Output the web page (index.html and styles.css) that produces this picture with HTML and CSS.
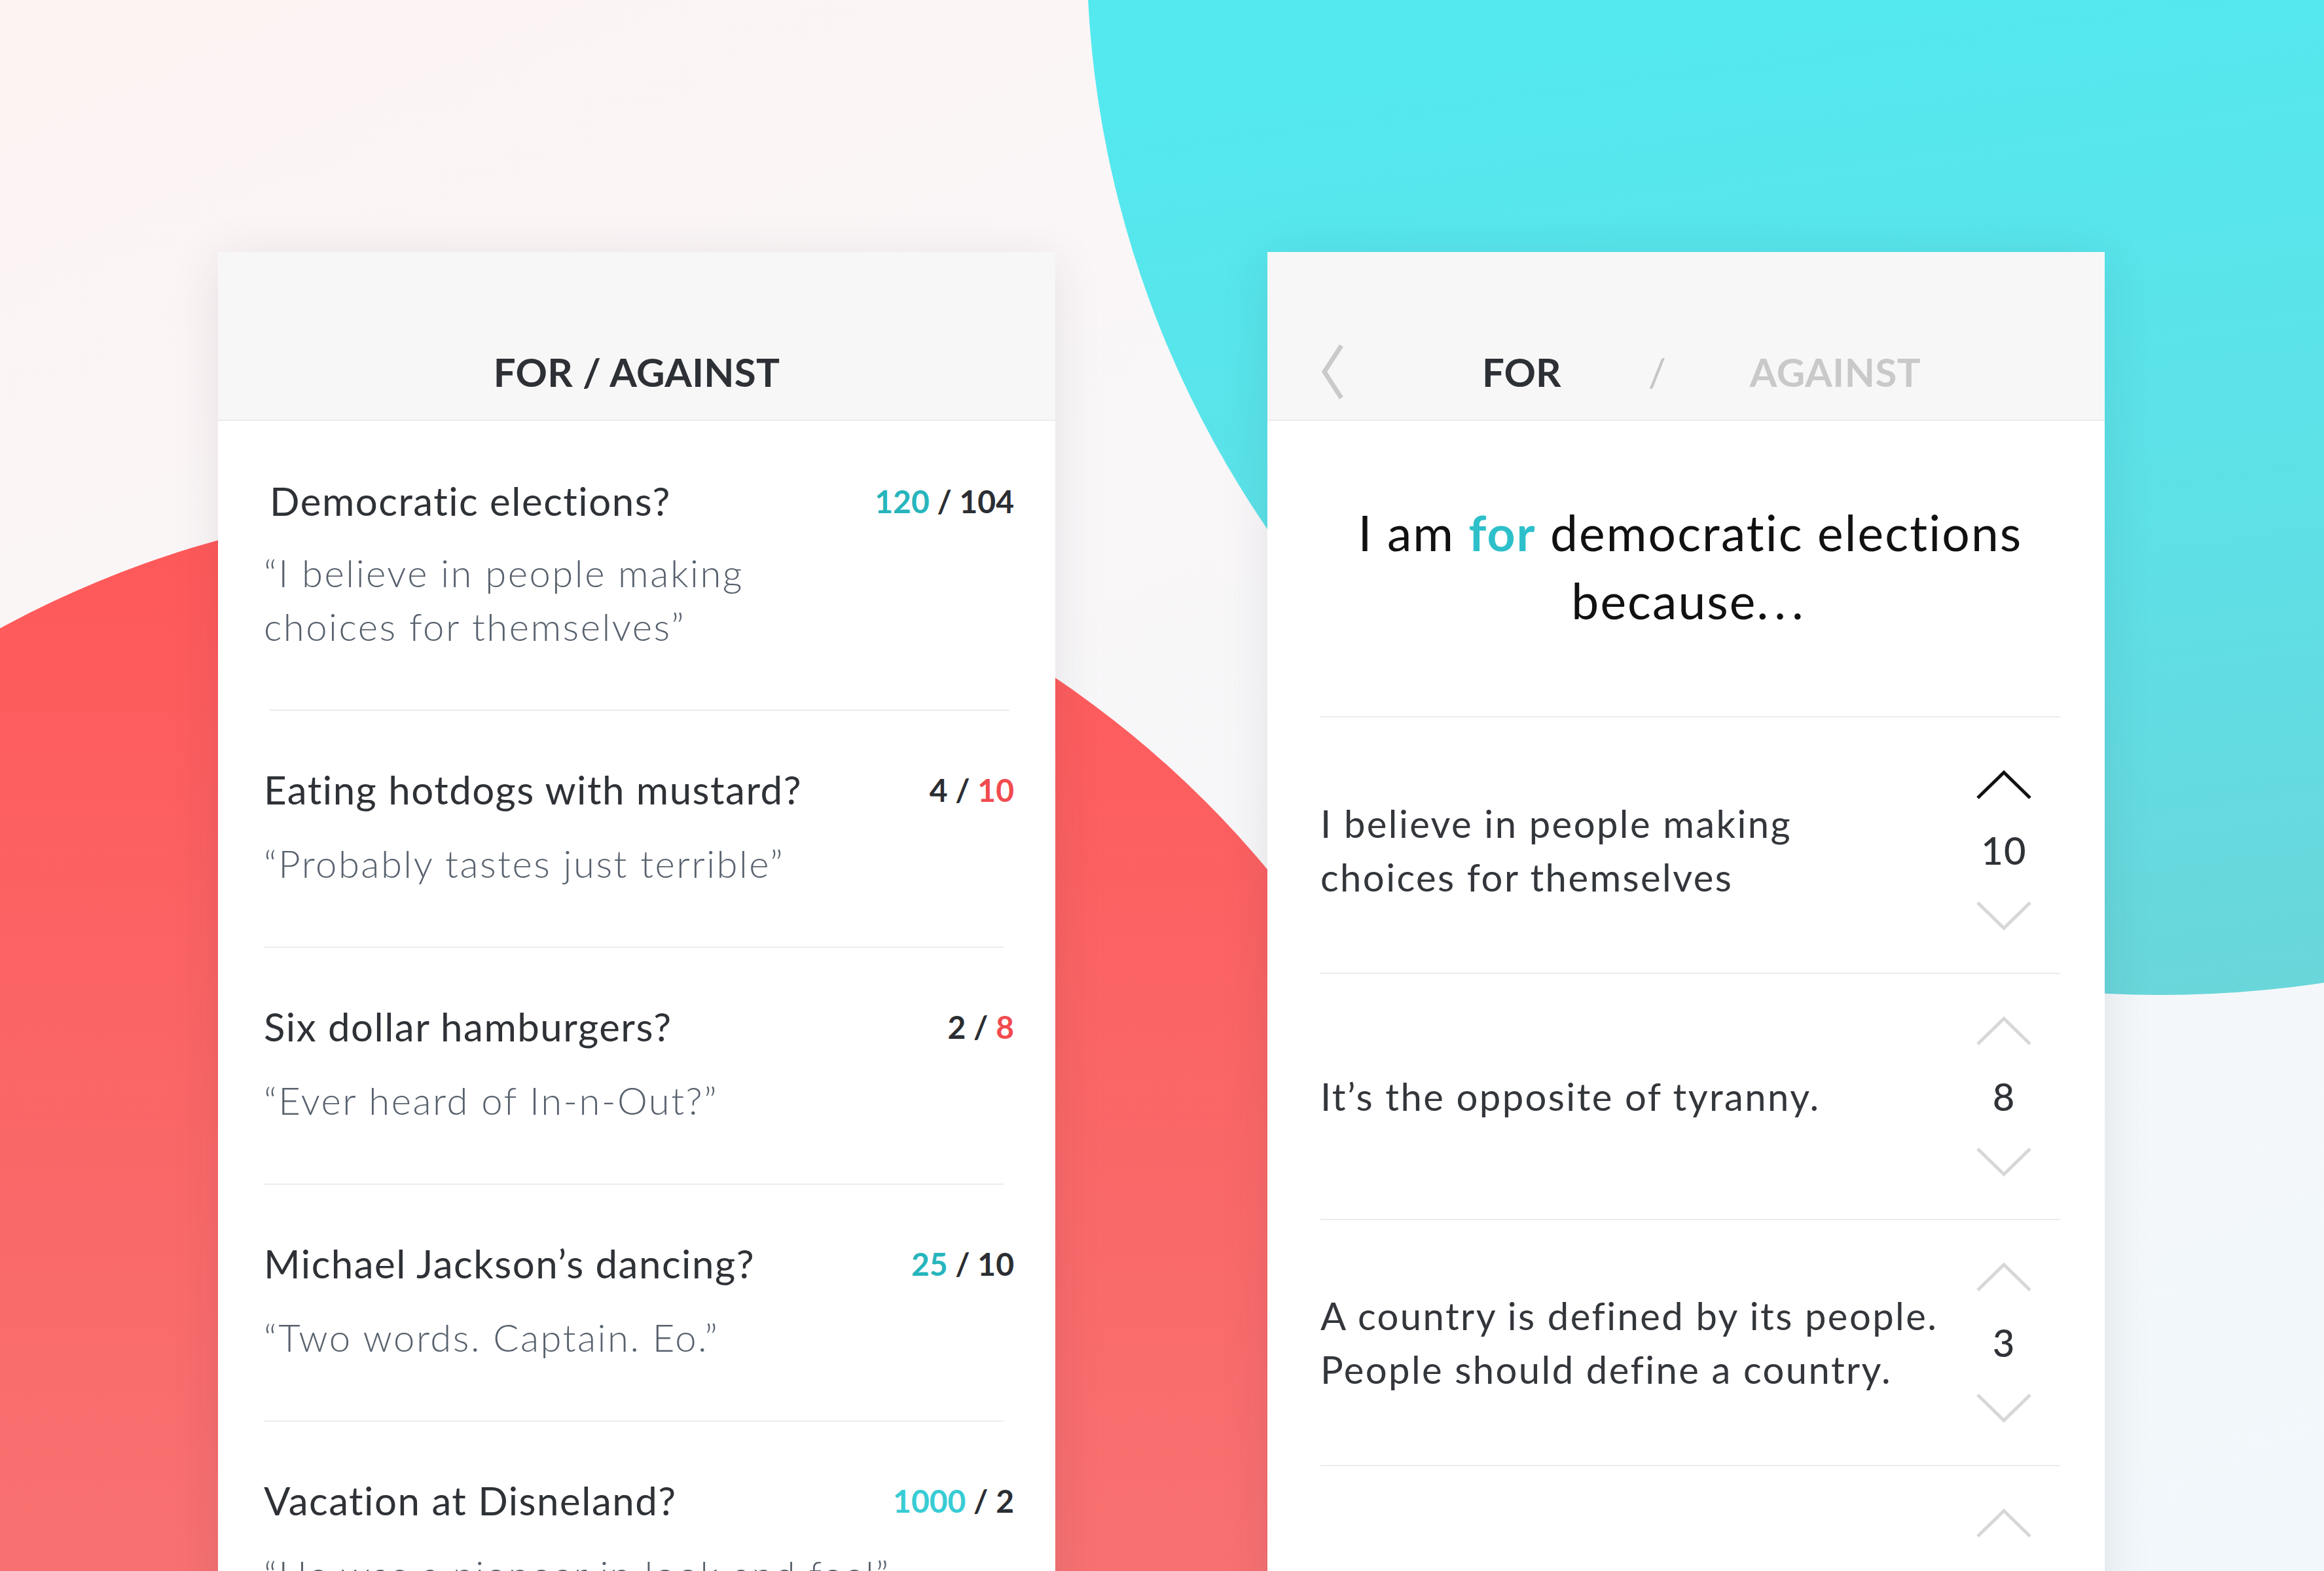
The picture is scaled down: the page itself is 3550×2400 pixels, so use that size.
FILE: index.html
```html
<!DOCTYPE html>
<html lang="en">
<head>
<meta charset="utf-8">
<title>For / Against</title>
<link rel="stylesheet" href="styles.css">
</head>
<body>
<div class="stage">
  <div class="blob blob--red"></div>
  <div class="blob blob--teal"></div>

  <main class="screens">
    <!-- List screen -->
    <section class="card">
      <header class="card__header">
        <div class="card__bar card__bar--center">
          <h1 class="title">FOR / AGAINST</h1>
        </div>
      </header>

      <ul class="topics">
        <li class="topic topic--first">
          <div class="topic__head">
            <span class="topic__title">Democratic elections?</span>
            <span class="score"><span class="score__for">120</span> / <span>104</span></span>
          </div>
          <p class="topic__quote">“I believe in people making<br>choices for themselves”</p>
        </li>
        <li class="topic">
          <div class="topic__head">
            <span class="topic__title">Eating hotdogs with mustard?</span>
            <span class="score"><span>4</span> / <span class="score__against">10</span></span>
          </div>
          <p class="topic__quote">“Probably tastes just terrible”</p>
        </li>
        <li class="topic">
          <div class="topic__head">
            <span class="topic__title">Six dollar hamburgers?</span>
            <span class="score"><span>2</span> / <span class="score__against">8</span></span>
          </div>
          <p class="topic__quote">“Ever heard of In-n-Out?”</p>
        </li>
        <li class="topic">
          <div class="topic__head">
            <span class="topic__title">Michael Jackson’s dancing?</span>
            <span class="score"><span class="score__for">25</span> / <span>10</span></span>
          </div>
          <p class="topic__quote">“Two words. Captain. Eo.”</p>
        </li>
        <li class="topic topic--last">
          <div class="topic__head">
            <span class="topic__title">Vacation at Disneland?</span>
            <span class="score"><span class="score__for score__for--light">1000</span> / <span>2</span></span>
          </div>
          <p class="topic__quote">“He was a pioneer in look and feel”</p>
        </li>
      </ul>
    </section>

    <!-- Detail screen -->
    <section class="card">
      <header class="card__header">
        <div class="card__bar card__bar--nav">
          <svg class="back" viewBox="0 0 44 92" aria-hidden="true">
            <polyline points="36,6 10,46 36,86"></polyline>
          </svg>
          <span class="tab tab--active">FOR</span>
          <span class="tab-sep">/</span>
          <span class="tab tab--inactive">AGAINST</span>
        </div>
      </header>

      <h2 class="claim">I am <span class="claim__for">for</span> democratic elections<br>because<span class="claim__dots">...</span></h2>

      <ul class="reasons">
        <li class="reason reason--first">
          <p class="reason__text">I believe in people making<br>choices for themselves</p>
          <div class="vote">
            <svg class="vote__arrow vote__arrow--on" viewBox="0 0 86 46" aria-hidden="true"><polyline points="3,43 43,4 83,43"></polyline></svg>
            <span class="vote__count">10</span>
            <svg class="vote__arrow" viewBox="0 0 86 46" aria-hidden="true"><polyline points="3,3 43,42 83,3"></polyline></svg>
          </div>
        </li>
        <li class="reason">
          <p class="reason__text">It’s the opposite of tyranny.</p>
          <div class="vote">
            <svg class="vote__arrow" viewBox="0 0 86 46" aria-hidden="true"><polyline points="3,43 43,4 83,43"></polyline></svg>
            <span class="vote__count">8</span>
            <svg class="vote__arrow" viewBox="0 0 86 46" aria-hidden="true"><polyline points="3,3 43,42 83,3"></polyline></svg>
          </div>
        </li>
        <li class="reason">
          <p class="reason__text">A country is defined by its people.<br>People should define a country.</p>
          <div class="vote">
            <svg class="vote__arrow" viewBox="0 0 86 46" aria-hidden="true"><polyline points="3,43 43,4 83,43"></polyline></svg>
            <span class="vote__count">3</span>
            <svg class="vote__arrow" viewBox="0 0 86 46" aria-hidden="true"><polyline points="3,3 43,42 83,3"></polyline></svg>
          </div>
        </li>
        <li class="reason">
          <p class="reason__text">Everyone should have a say.</p>
          <div class="vote">
            <svg class="vote__arrow" viewBox="0 0 86 46" aria-hidden="true"><polyline points="3,43 43,4 83,43"></polyline></svg>
            <span class="vote__count">2</span>
            <svg class="vote__arrow" viewBox="0 0 86 46" aria-hidden="true"><polyline points="3,3 43,42 83,3"></polyline></svg>
          </div>
        </li>
      </ul>
    </section>
  </main>
</div>
</body>
</html>
```

FILE: styles.css
```css
* {
  box-sizing: border-box;
  margin: 0;
  padding: 0;
}

html,
body {
  width: 3550px;
  height: 2400px;
  overflow: hidden;
}

body {
  font-family: Lato, "Open Sans", "Liberation Sans", sans-serif;
  color: #2e3136;
}

.stage {
  position: relative;
  width: 3550px;
  height: 2400px;
  overflow: hidden;
  background: linear-gradient(155deg, #fdf3f3 0%, #faf7f8 35%, #f6f7f9 60%, #f1f8fb 100%);
}

/* decorative background shapes */
.blob {
  position: absolute;
  border-radius: 50%;
}

.blob--red {
  left: -808px;
  top: 770px;
  width: 3104px;
  height: 3104px;
  background: linear-gradient(180deg, #ff5859 0%, #fb6465 25%, #f87171 52%, #f67a7a 100%);
}

.blob--teal {
  left: 1660px;
  top: -1680px;
  width: 3280px;
  height: 3200px;
  background: linear-gradient(172deg, #53e9ef 50%, #5ee0e6 75%, #6dd3d7 100%);
}

/* cards */
.screens {
  position: relative;
  display: flex;
  align-items: flex-start;
  gap: 324px;
  padding: 385px 0 0 333px;
  height: 2400px;
}

.card {
  flex: none;
  width: 1279px;
  min-height: 2100px;
  background: #fff;
  box-shadow: 0 10px 70px rgba(40, 40, 55, 0.10);
}

.card__header {
  height: 258px;
  background: #f7f7f7;
  border-bottom: 2px solid #ebebeb;
  display: flex;
  align-items: flex-end;
  padding-bottom: 27px;
}

.card__bar {
  width: 100%;
  height: 92px;
  display: flex;
  align-items: center;
}

.card__bar--center {
  justify-content: center;
}

.title {
  font-size: 60px;
  font-weight: 700;
  color: #2d3035;
  letter-spacing: 0.3px;
}

/* list screen */
.topics {
  list-style: none;
}

.topic {
  margin: 0 79px 0 70px;
  padding: 80px 0 86px;
  border-bottom: 2px solid #ececec;
}

.topic--first {
  margin: 0 70px 0 79px;
  padding-top: 82px;
}

.topic__head {
  display: flex;
  justify-content: space-between;
  align-items: center;
}

.topic__title {
  font-size: 60px;
  line-height: 80px;
  letter-spacing: 1.5px;
  color: #2e3136;
}

.score {
  font-size: 48px;
  font-weight: 700;
  color: #2b2e33;
  margin-right: -16px;
  white-space: nowrap;
}

.topic--first .score {
  margin-right: -7px;
}

.score__for {
  color: #27b5bd;
}

.score__for--light {
  color: #38ccd4;
}

.score__against {
  color: #f24b4f;
}

.topic__quote {
  margin-top: 32px;
  font-size: 58px;
  line-height: 82px;
  letter-spacing: 2.5px;
  font-weight: 300;
  color: #58626e;
}

.topic--first .topic__quote {
  margin-left: -9px;
  margin-top: 29px;
}

/* detail screen */
.card__bar--nav {
  padding-left: 77px;
}

.back {
  flex: none;
  width: 44px;
  height: 92px;
}

.back polyline {
  fill: none;
  stroke: #cacaca;
  stroke-width: 7;
}

.tab {
  font-size: 60px;
  font-weight: 700;
}

.tab--active {
  margin-left: 207px;
  color: #2d3035;
}

.tab-sep {
  margin-left: 133px;
  font-size: 60px;
  font-weight: 400;
  color: #c4c4c4;
}

.tab--inactive {
  margin-left: 128px;
  color: #c9c9c9;
  letter-spacing: 0.5px;
}

.claim {
  margin: 0 68px 0 81px;
  padding: 118px 0 125px;
  border-bottom: 2px solid #ececec;
  text-align: center;
  font-size: 75px;
  line-height: 104px;
  letter-spacing: 2.1px;
  font-weight: 400;
  color: #111;
}

.claim__for {
  color: #2dc0ca;
  font-weight: 700;
}

.claim__dots {
  letter-spacing: 9px;
}

.reasons {
  list-style: none;
}

.reason {
  margin: 0 68px 0 81px;
  padding: 64px 0;
  border-bottom: 2px solid #ececec;
  display: flex;
  align-items: center;
}

.reason--first {
  padding-top: 80px;
}

.reason__text {
  flex: 1;
  font-size: 58px;
  line-height: 82px;
  letter-spacing: 2.4px;
  color: #33363b;
}

.vote {
  flex: none;
  width: 86px;
  margin-right: 43px;
  display: flex;
  flex-direction: column;
  align-items: center;
}

.vote__arrow {
  display: block;
  width: 86px;
  height: 46px;
}

.vote__arrow polyline {
  fill: none;
  stroke: #d7d7d7;
  stroke-width: 5;
}

.vote__arrow--on polyline {
  stroke: #111;
}

.vote__count {
  height: 154px;
  line-height: 154px;
  font-size: 58px;
  font-weight: 500;
  letter-spacing: 1px;
  color: #2f3237;
}
```
